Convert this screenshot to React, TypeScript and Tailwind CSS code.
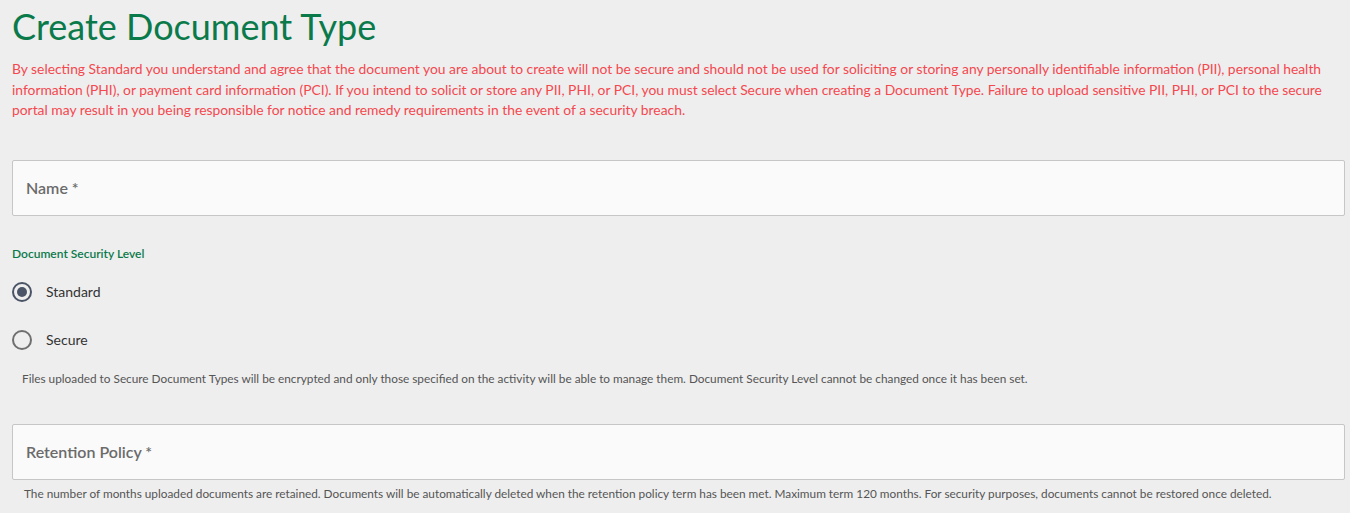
import React from "react";

export default function App() {
  return (
    <div className="min-h-[513px] bg-[#eeeeee] pl-[12px] pr-[5px] pt-[4px]" style={{ fontFamily: "Lato, 'Noto Sans', sans-serif" }}>
      <h1 className="text-[36px] leading-[44px] text-[#0b7a4b] font-normal">Create Document Type</h1>
      <p className="mt-[11px] text-[13.85px] leading-[20.5px] text-[#f4484f]">
        By selecting Standard you understand and agree that the document you are about to create will not be secure and should not be used for soliciting or storing any personally identifiable information (PII), personal health information (PHI), or payment card information (PCI). If you intend to solicit or store any PII, PHI, or PCI, you must select Secure when creating a Document Type. Failure to upload sensitive PII, PHI, or PCI to the secure portal may result in you being responsible for notice and remedy requirements in the event of a security breach.
      </p>
      <div className="mt-[39px] h-[56px] bg-[#fafafa] border border-[#c6c6c6] rounded-[2px] flex items-center px-[13px]">
        <span className="text-[16px] font-semibold text-[#6b6b6b]">Name *</span>
      </div>
      <div className="mt-[30px] text-[12px] font-semibold text-[#0b7a4b] leading-[16px]">Document Security Level</div>
      <div className="mt-[20px] flex items-center h-[20px]">
        <span className="w-[20px] h-[20px] rounded-full border-2 border-[#4a5466] flex items-center justify-center">
          <span className="w-[10px] h-[10px] rounded-full bg-[#4a5466]" />
        </span>
        <span className="ml-[14px] text-[14px] text-[#333333]">Standard</span>
      </div>
      <div className="mt-[28px] flex items-center h-[20px]">
        <span className="w-[20px] h-[20px] rounded-full border-2 border-[#6f6f6f]" />
        <span className="ml-[14px] text-[14px] text-[#333333]">Secure</span>
      </div>
      <div className="mt-[22px] pl-[10px] text-[11.8px] leading-[14px] text-[#555555]">
        Files uploaded to Secure Document Types will be encrypted and only those specified on the activity will be able to manage them. Document Security Level cannot be changed once it has been set.
      </div>
      <div className="mt-[38px] h-[56px] bg-[#fafafa] border border-[#c6c6c6] rounded-[2px] flex items-center px-[13px]">
        <span className="text-[16px] font-semibold text-[#6b6b6b]">Retention Policy *</span>
      </div>
      <div className="mt-[7px] pl-[12px] text-[11.8px] leading-[14px] text-[#555555]">
        The number of months uploaded documents are retained. Documents will be automatically deleted when the retention policy term has been met. Maximum term 120 months. For security purposes, documents cannot be restored once deleted.
      </div>
    </div>
  );
}
